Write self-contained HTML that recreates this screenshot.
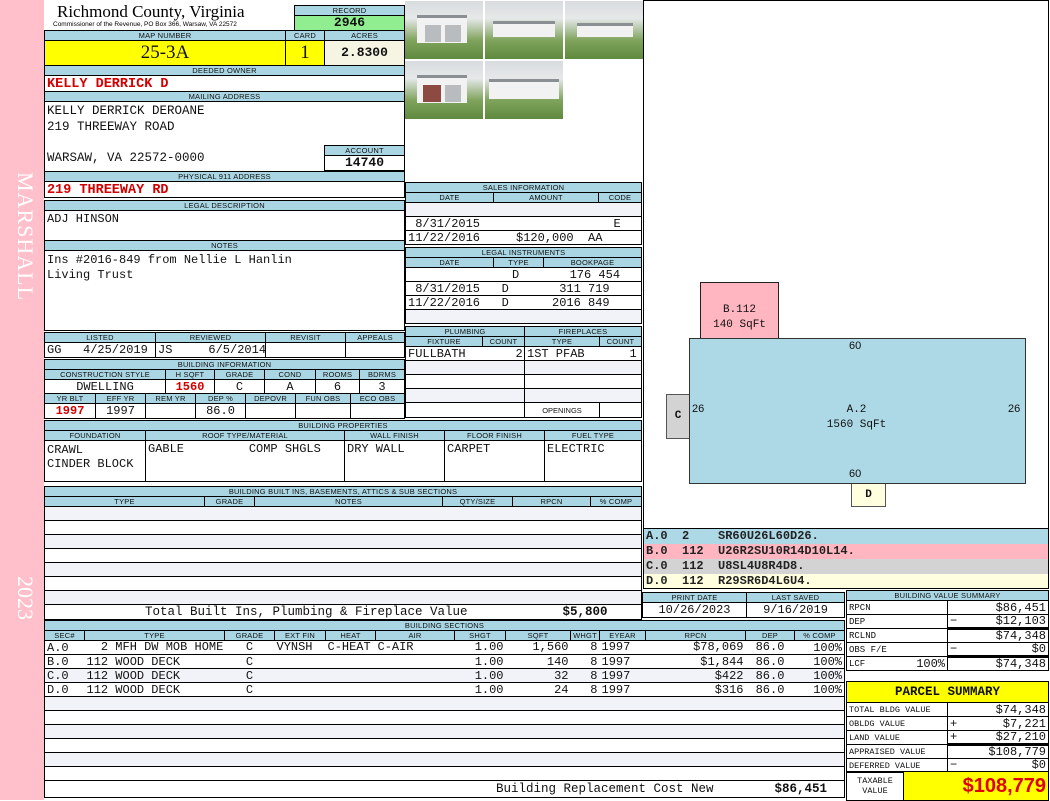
<!DOCTYPE html>
<html><head><meta charset="utf-8">
<style>
*{box-sizing:border-box;margin:0;padding:0}
body{width:1050px;height:800px;position:relative;background:#fff;overflow:hidden;font-family:"Liberation Mono",monospace;color:#111}
.a{position:absolute}
table{border-collapse:collapse;table-layout:fixed;position:absolute}
td{border:1px solid #000;padding:0 2px;overflow:hidden;white-space:nowrap;font-size:12px;line-height:12px}
td.h,.h td{background:#aad6e4;font:7.5px "Liberation Sans",sans-serif;text-align:center;height:10px;line-height:9px;letter-spacing:.2px}
.r{color:#d40000;font-weight:bold}
.c{text-align:center}.rt{text-align:right}
.g td{background:#f1f3f8}
.box{position:absolute;border:1px solid #000}
.ph{position:absolute;width:78px;height:58px;background:linear-gradient(#d8dcdf 0,#e6e8e9 30%,#7fa35c 68%,#5f8a3e 100%);overflow:hidden}
.ph i{position:absolute;background:#f2f2f2;border-top:3px solid #8a8f94}
.ph b{position:absolute;background:#b9bcbf}
</style></head><body>
<div class="a" style="left:0;top:0;width:44px;height:800px;background:#ffc0cb"></div>
<div class="a" style="left:8px;top:172px;width:30px;font:22px 'Liberation Serif',serif;color:#fff;writing-mode:vertical-rl;letter-spacing:1px">MARSHALL</div>
<div class="a" style="left:8px;top:576px;width:30px;font:22px 'Liberation Serif',serif;color:#fff;writing-mode:vertical-rl">2023</div>

<div class="a" style="left:57px;top:2px;font:17px 'Liberation Serif',serif;color:#000">Richmond County, Virginia</div>
<div class="a" style="left:53px;top:21px;font:6.5px 'Liberation Sans',sans-serif;color:#000">Commissioner of the Revenue, PO Box 366, Warsaw, VA 22572</div>

<table style="left:294px;top:5px;width:111px"><tr class="h"><td>RECORD</td></tr><tr><td class="c" style="background:#90ee90;height:15px;font-weight:bold;font-size:13px">2946</td></tr></table>

<table style="left:44px;top:30px;width:361px"><col style="width:241px"><col style="width:39px"><col>
<tr class="h"><td>MAP NUMBER</td><td>CARD</td><td>ACRES</td></tr>
<tr><td class="c" style="background:#ffff00;height:25px;font:19px 'Liberation Serif',serif">25-3A</td><td class="c" style="background:#ffff00;font:19px 'Liberation Serif',serif">1</td><td class="c" style="background:#f6f4e2;font-weight:bold;font-size:13px">2.8300</td></tr>
<tr class="h"><td colspan="3">DEEDED OWNER</td></tr>
<tr><td colspan="3" class="r" style="height:15px;font-size:13.5px;padding-top:3px">KELLY DERRICK D</td></tr>
<tr class="h"><td colspan="3">MAILING ADDRESS</td></tr>
<tr><td colspan="3" style="height:70px;vertical-align:top;font-size:12.5px;line-height:15.5px;padding-top:2px">KELLY DERRICK DEROANE<br>219 THREEWAY ROAD<br><br>WARSAW, VA 22572-0000</td></tr>
<tr class="h"><td colspan="3">PHYSICAL 911 ADDRESS</td></tr>
<tr><td colspan="3" class="r" style="height:15px;font-size:13.5px;padding-top:3px">219 THREEWAY RD</td></tr>
</table>
<table style="left:324px;top:145px;width:81px"><tr class="h"><td>ACCOUNT</td></tr><tr><td class="c" style="height:15px;font-weight:bold;font-size:13px;background:#fff">14740</td></tr></table>

<table style="left:44px;top:200px;width:361px">
<tr class="h"><td>LEGAL DESCRIPTION</td></tr>
<tr><td style="height:30px;vertical-align:top;padding-top:2px">ADJ HINSON</td></tr>
<tr class="h"><td>NOTES</td></tr>
<tr><td style="height:80px;vertical-align:top;padding-top:2px;line-height:15px">Ins #2016-849 from Nellie L Hanlin<br>Living Trust</td></tr>
</table>

<table style="left:44px;top:332px;width:361px"><col style="width:111px"><col style="width:110px"><col style="width:80px"><col>
<tr class="h"><td>LISTED</td><td>REVIEWED</td><td>REVISIT</td><td>APPEALS</td></tr>
<tr><td style="height:15px">GG&nbsp;&nbsp;&nbsp;4/25/2019</td><td>JS&nbsp;&nbsp;&nbsp;&nbsp;&nbsp;6/5/2014</td><td></td><td></td></tr>
</table>

<table style="left:44px;top:359px;width:361px"><col style="width:121px"><col style="width:49px"><col style="width:50px"><col style="width:51px"><col style="width:44px"><col>
<tr class="h"><td colspan="6">BUILDING INFORMATION</td></tr>
<tr class="h"><td>CONSTRUCTION STYLE</td><td>H SQFT</td><td>GRADE</td><td>COND</td><td>ROOMS</td><td>BDRMS</td></tr>
<tr><td class="c" style="height:14px">DWELLING</td><td class="c r">1560</td><td class="c">C</td><td class="c">A</td><td class="c">6</td><td class="c">3</td></tr>
</table>
<table style="left:44px;top:393px;width:361px"><col style="width:51px"><col style="width:50px"><col style="width:50px"><col style="width:50px"><col style="width:50px"><col style="width:55px"><col>
<tr class="h"><td>YR BLT</td><td>EFF YR</td><td>REM YR</td><td>DEP %</td><td>DEPOVR</td><td>FUN OBS</td><td>ECO OBS</td></tr>
<tr><td class="c r" style="height:15px">1997</td><td class="c">1997</td><td></td><td class="c">86.0</td><td></td><td></td><td></td></tr>
</table>

<table style="left:44px;top:420px;width:598px"><col style="width:101px"><col style="width:199px"><col style="width:100px"><col style="width:100px"><col>
<tr class="h"><td colspan="5">BUILDING PROPERTIES</td></tr>
<tr class="h"><td>FOUNDATION</td><td>ROOF TYPE/MATERIAL</td><td>WALL FINISH</td><td>FLOOR FINISH</td><td>FUEL TYPE</td></tr>
<tr><td style="height:41px;vertical-align:top;padding-top:2px;line-height:14px">CRAWL<br>CINDER BLOCK</td><td style="vertical-align:top;padding-top:2px">GABLE&nbsp;&nbsp;&nbsp;&nbsp;&nbsp;&nbsp;&nbsp;&nbsp;&nbsp;COMP SHGLS</td><td style="vertical-align:top;padding-top:2px">DRY WALL</td><td style="vertical-align:top;padding-top:2px">CARPET</td><td style="vertical-align:top;padding-top:2px">ELECTRIC</td></tr>
</table>

<table style="left:44px;top:486px;width:598px"><col style="width:160px"><col style="width:50px"><col style="width:188px"><col style="width:70px"><col style="width:78px"><col>
<tr class="h"><td colspan="6">BUILDING BUILT INS, BASEMENTS, ATTICS &amp; SUB SECTIONS</td></tr>
<tr class="h"><td>TYPE</td><td>GRADE</td><td>NOTES</td><td>QTY/SIZE</td><td>RPCN</td><td>% COMP</td></tr>
<tr class="g"><td colspan="6" style="height:14px"></td></tr>
<tr><td colspan="6" style="height:14px"></td></tr>
<tr class="g"><td colspan="6" style="height:14px"></td></tr>
<tr><td colspan="6" style="height:14px"></td></tr>
<tr class="g"><td colspan="6" style="height:14px"></td></tr>
<tr><td colspan="6" style="height:14px"></td></tr>
<tr class="g"><td colspan="6" style="height:14px"></td></tr>
<tr><td colspan="6" style="height:15px;font-size:12.5px;padding-left:100px">Total Built Ins, Plumbing &amp; Fireplace Value<span style="position:absolute;left:518px;font-weight:bold">$5,800</span></td></tr>
</table>

<table style="left:44px;top:620px;width:801px"><col style="width:40px"><col style="width:140px"><col style="width:50px"><col style="width:51px"><col style="width:50px"><col style="width:79px"><col style="width:51px"><col style="width:65px"><col style="width:29px"><col style="width:46px"><col style="width:100px"><col style="width:49px"><col>
<tr class="h"><td colspan="13">BUILDING SECTIONS</td></tr>
<tr class="h"><td>SEC#</td><td>TYPE</td><td>GRADE</td><td>EXT FIN</td><td>HEAT</td><td>AIR</td><td>SHGT</td><td>SQFT</td><td>WHGT</td><td>EYEAR</td><td>RPCN</td><td>DEP</td><td>% COMP</td></tr>
</table>
<table style="left:44px;top:640px;width:801px;font-size:12px"><col style="width:40px"><col style="width:140px"><col style="width:50px"><col style="width:51px"><col style="width:50px"><col style="width:79px"><col style="width:51px"><col style="width:65px"><col style="width:29px"><col style="width:46px"><col style="width:100px"><col style="width:49px"><col>
<tr><td style="height:14px;border-right:0">A.0</td><td style="border:0;border-bottom:1px solid #000">&nbsp;&nbsp;2 MFH DW MOB HOME</td><td class="c" style="border:0;border-bottom:1px solid #000">C</td><td style="border:0;border-bottom:1px solid #000">VYNSH</td><td style="border:0;border-bottom:1px solid #000">C-HEAT</td><td style="border:0;border-bottom:1px solid #000">C-AIR</td><td class="rt" style="border:0;border-bottom:1px solid #000">1.00</td><td class="rt" style="border:0;border-bottom:1px solid #000">1,560</td><td class="rt" style="border:0;border-bottom:1px solid #000">8</td><td style="border:0;border-bottom:1px solid #000">1997</td><td class="rt" style="border:0;border-bottom:1px solid #000">$78,069</td><td class="c" style="border:0;border-bottom:1px solid #000">86.0</td><td class="rt" style="border-left:0">100%</td></tr>
<tr><td style="height:14px;border-right:0">B.0</td><td style="border:0;border-bottom:1px solid #000">112 WOOD DECK</td><td class="c" style="border:0;border-bottom:1px solid #000">C</td><td style="border:0;border-bottom:1px solid #000"></td><td style="border:0;border-bottom:1px solid #000"></td><td style="border:0;border-bottom:1px solid #000"></td><td class="rt" style="border:0;border-bottom:1px solid #000">1.00</td><td class="rt" style="border:0;border-bottom:1px solid #000">140</td><td class="rt" style="border:0;border-bottom:1px solid #000">8</td><td style="border:0;border-bottom:1px solid #000">1997</td><td class="rt" style="border:0;border-bottom:1px solid #000">$1,844</td><td class="c" style="border:0;border-bottom:1px solid #000">86.0</td><td class="rt" style="border-left:0">100%</td></tr>
<tr class="g"><td style="height:14px;border-right:0">C.0</td><td style="border:0;border-bottom:1px solid #000">112 WOOD DECK</td><td class="c" style="border:0;border-bottom:1px solid #000">C</td><td style="border:0;border-bottom:1px solid #000"></td><td style="border:0;border-bottom:1px solid #000"></td><td style="border:0;border-bottom:1px solid #000"></td><td class="rt" style="border:0;border-bottom:1px solid #000">1.00</td><td class="rt" style="border:0;border-bottom:1px solid #000">32</td><td class="rt" style="border:0;border-bottom:1px solid #000">8</td><td style="border:0;border-bottom:1px solid #000">1997</td><td class="rt" style="border:0;border-bottom:1px solid #000">$422</td><td class="c" style="border:0;border-bottom:1px solid #000">86.0</td><td class="rt" style="border-left:0">100%</td></tr>
<tr><td style="height:14px;border-right:0">D.0</td><td style="border:0;border-bottom:1px solid #000">112 WOOD DECK</td><td class="c" style="border:0;border-bottom:1px solid #000">C</td><td style="border:0;border-bottom:1px solid #000"></td><td style="border:0;border-bottom:1px solid #000"></td><td style="border:0;border-bottom:1px solid #000"></td><td class="rt" style="border:0;border-bottom:1px solid #000">1.00</td><td class="rt" style="border:0;border-bottom:1px solid #000">24</td><td class="rt" style="border:0;border-bottom:1px solid #000">8</td><td style="border:0;border-bottom:1px solid #000">1997</td><td class="rt" style="border:0;border-bottom:1px solid #000">$316</td><td class="c" style="border:0;border-bottom:1px solid #000">86.0</td><td class="rt" style="border-left:0">100%</td></tr>
<tr class="g"><td colspan="13" style="height:14px"></td></tr>
<tr><td colspan="13" style="height:14px"></td></tr>
<tr class="g"><td colspan="13" style="height:14px"></td></tr>
<tr><td colspan="13" style="height:14px"></td></tr>
<tr class="g"><td colspan="13" style="height:14px"></td></tr>
<tr><td colspan="13" style="height:14px"></td></tr>
<tr><td colspan="13" style="height:17px;font-size:12.5px;padding-left:451px">Building Replacement Cost New<span style="position:absolute;left:730px;font-weight:bold">$86,451</span></td></tr>
</table>

<!-- photos -->
<div class="ph" style="left:405px;top:1px"><i style="left:12px;top:14px;width:50px;height:28px"></i><b style="left:20px;top:24px;width:16px;height:17px"></b><b style="left:40px;top:24px;width:16px;height:17px"></b></div>
<div class="ph" style="left:485px;top:1px"><i style="left:8px;top:20px;width:62px;height:16px"></i></div>
<div class="ph" style="left:565px;top:1px"><i style="left:12px;top:22px;width:56px;height:14px"></i></div>
<div class="ph" style="left:405px;top:61px"><i style="left:12px;top:14px;width:50px;height:28px"></i><b style="left:18px;top:24px;width:18px;height:17px;background:#8c4a40"></b><b style="left:40px;top:24px;width:16px;height:17px"></b></div>
<div class="ph" style="left:485px;top:61px"><i style="left:4px;top:18px;width:70px;height:20px"></i></div>

<table style="left:405px;top:182px;width:237px"><col style="width:88px"><col style="width:105px"><col>
<tr class="h"><td colspan="3">SALES INFORMATION</td></tr>
<tr class="h"><td>DATE</td><td>AMOUNT</td><td>CODE</td></tr>
<tr class="g"><td colspan="3" style="height:14px"></td></tr>
<tr><td colspan="3" style="height:14px">&nbsp;8/31/2015<span style="position:absolute;left:208px">E</span></td></tr>
<tr><td colspan="3" style="height:14px">11/22/2016&nbsp;&nbsp;&nbsp;&nbsp;&nbsp;$120,000&nbsp;&nbsp;AA</td></tr>
</table>
<table style="left:405px;top:247px;width:237px"><col style="width:88px"><col style="width:50px"><col>
<tr class="h"><td colspan="3">LEGAL INSTRUMENTS</td></tr>
<tr class="h"><td>DATE</td><td>TYPE</td><td>BOOKPAGE</td></tr>
<tr><td colspan="3" style="height:14px;padding-left:106px">D&nbsp;&nbsp;&nbsp;&nbsp;&nbsp;&nbsp;&nbsp;176 454</td></tr>
<tr><td colspan="3" style="height:14px">&nbsp;8/31/2015&nbsp;&nbsp;&nbsp;D&nbsp;&nbsp;&nbsp;&nbsp;&nbsp;&nbsp;&nbsp;311 719</td></tr>
<tr><td colspan="3" style="height:14px">11/22/2016&nbsp;&nbsp;&nbsp;D&nbsp;&nbsp;&nbsp;&nbsp;&nbsp;&nbsp;2016 849</td></tr>
<tr class="g"><td colspan="3" style="height:14px"></td></tr>
</table>
<table style="left:405px;top:326px;width:120px"><col style="width:77px"><col>
<tr class="h"><td colspan="2">PLUMBING</td></tr>
<tr class="h"><td>FIXTURE</td><td>COUNT</td></tr>
<tr><td colspan="2" style="height:14px">FULLBATH<span style="position:absolute;left:110px">2</span></td></tr>
<tr class="g"><td colspan="2" style="height:14px"></td></tr>
<tr><td colspan="2" style="height:14px"></td></tr>
<tr class="g"><td colspan="2" style="height:14px"></td></tr>
<tr><td colspan="2" style="border-width:0 1px 1px 1px;height:15px"></td></tr>
</table>
<table style="left:524px;top:326px;width:118px"><col style="width:75px"><col>
<tr class="h"><td colspan="2">FIREPLACES</td></tr>
<tr class="h"><td>TYPE</td><td>COUNT</td></tr>
<tr><td colspan="2" style="height:14px">1ST PFAB<span style="position:absolute;left:105px">1</span></td></tr>
<tr class="g"><td colspan="2" style="height:14px"></td></tr>
<tr><td colspan="2" style="height:14px"></td></tr>
<tr class="g"><td colspan="2" style="height:14px"></td></tr>
<tr><td style="height:15px;font:7.5px 'Liberation Sans',sans-serif;text-align:center">OPENINGS</td><td></td></tr>
</table>

<!-- sketch -->
<div class="box" style="left:643px;top:0;width:406px;height:529px;border-color:#000"></div>
<div class="box" style="left:700px;top:282px;width:79px;height:57px;background:#ffb6c1;border-color:#222;font-size:11px;text-align:center;padding-top:20px;line-height:15px">B.112<br>140 SqFt</div>
<div class="box" style="left:666px;top:394px;width:24px;height:45px;background:#d3d3d3;border-color:#555;font-size:11px;font-weight:bold;text-align:center;padding-top:15px">C</div>
<div class="box" style="left:851px;top:483px;width:35px;height:24px;background:#ffffe0;border-color:#555;font-size:11px;font-weight:bold;text-align:center;padding-top:5px">D</div>
<div class="box" style="left:689px;top:338px;width:337px;height:146px;background:#add8e6;border-color:#333"></div>
<div class="a" style="left:849px;top:340px;font:11px 'Liberation Sans',sans-serif">60</div>
<div class="a" style="left:849px;top:468px;font:11px 'Liberation Sans',sans-serif">60</div>
<div class="a" style="left:692px;top:403px;font:11px 'Liberation Sans',sans-serif">26</div>
<div class="a" style="left:1008px;top:403px;font:11px 'Liberation Sans',sans-serif">26</div>
<div class="a" style="left:789px;top:403px;width:135px;text-align:center;font-size:11px;line-height:15px">A.2<br>1560 SqFt</div>

<!-- legend -->
<div class="box" style="left:643px;top:528px;width:406px;height:61px;border-top:0"></div>
<div class="a" style="left:644px;top:529px;width:404px;height:15px;background:#add8e6;font-weight:bold;font-size:12px;line-height:15px;padding-left:2px;white-space:pre;color:#222">A.0  2    SR60U26L60D26.</div>
<div class="a" style="left:644px;top:544px;width:404px;height:15px;background:#ffb6c1;font-weight:bold;font-size:12px;line-height:15px;padding-left:2px;white-space:pre;color:#222">B.0  112  U26R2SU10R14D10L14.</div>
<div class="a" style="left:644px;top:559px;width:404px;height:15px;background:#d3d3d3;font-weight:bold;font-size:12px;line-height:15px;padding-left:2px;white-space:pre;color:#222">C.0  112  U8SL4U8R4D8.</div>
<div class="a" style="left:644px;top:574px;width:404px;height:14px;background:#ffffe0;font-weight:bold;font-size:12px;line-height:14px;padding-left:2px;white-space:pre;color:#222">D.0  112  R29SR6D4L6U4.</div>

<table style="left:642px;top:592px;width:203px"><col style="width:104px"><col>
<tr class="h"><td>PRINT DATE</td><td>LAST SAVED</td></tr>
<tr><td class="c" style="height:15px">10/26/2023</td><td class="c">9/16/2019</td></tr>
</table>

<table style="left:846px;top:590px;width:203px;font-size:11px"><col style="width:101px"><col>
<tr class="h"><td colspan="2">BUILDING VALUE SUMMARY</td></tr>
<tr><td style="height:14px;font-size:9px">RPCN</td><td class="rt">$86,451</td></tr>
<tr><td style="height:14px;font-size:9px">DEP</td><td class="rt" style="border-bottom:3px solid #000"><span style="float:left">&minus;</span>$12,103</td></tr>
<tr><td style="height:14px;font-size:9px">RCLND</td><td class="rt">$74,348</td></tr>
<tr><td style="height:14px;font-size:9px">OBS F/E</td><td class="rt" style="border-bottom:3px solid #000"><span style="float:left">&minus;</span>$0</td></tr>
<tr><td style="height:14px;font-size:9px">LCF<span style="float:right;font-size:12px">100%</span></td><td class="rt">$74,348</td></tr>
</table>

<table style="left:846px;top:681px;width:203px"><col style="width:101px"><col>
<tr><td colspan="2" class="c" style="background:#ffff00;height:21px;font-weight:bold;font-size:12.5px">PARCEL SUMMARY</td></tr>
<tr><td style="height:14px;font-size:8.5px">TOTAL BLDG VALUE</td><td class="rt">$74,348</td></tr>
<tr><td style="height:14px;font-size:8.5px">OBLDG VALUE</td><td class="rt"><span style="float:left">+</span>$7,221</td></tr>
<tr><td style="height:14px;font-size:8.5px">LAND VALUE</td><td class="rt" style="border-bottom:3px solid #000"><span style="float:left">+</span>$27,210</td></tr>
<tr><td style="height:14px;font-size:8.5px">APPRAISED VALUE</td><td class="rt">$108,779</td></tr>
<tr><td style="height:14px;font-size:8.5px">DEFERRED VALUE</td><td class="rt" style="border-bottom:3px solid #000"><span style="float:left">&minus;</span>$0</td></tr>
</table>
<table style="left:846px;top:771px;width:203px"><col style="width:57px"><col>
<tr><td style="height:29px;font-size:8.5px;line-height:10px;text-align:center">TAXABLE<br>VALUE</td><td class="rt" style="background:#ffff00;color:#e00000;font:bold 20px 'Liberation Sans',sans-serif">$108,779</td></tr>
</table>
</body></html>
